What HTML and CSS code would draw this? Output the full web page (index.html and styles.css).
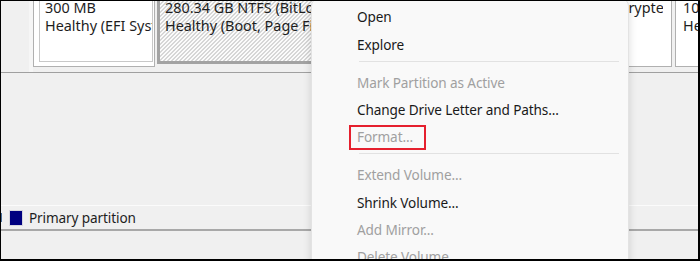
FILE: index.html
```html
<!DOCTYPE html>
<html>
<head>
<meta charset="utf-8">
<link rel="stylesheet" href="styles.css">
</head>
<body>
<div class="frame">
  <div class="disk-row">
    <div class="disk-label"></div>
    <div class="parts">
      <div class="part p1">
        <div class="inner">
          <div class="txt">300 MB<br>Healthy (EFI System Partition)</div>
        </div>
      </div>
      <div class="part p2">
        <div class="txt">280.34 GB NTFS (BitLocker Encrypted)<br>Healthy (Boot, Page File, Crash Dump, Primary Partition)</div>
      </div>
      <div class="part p3">
        <div class="clip">
          <div class="txt right">200.00 GB NTFS (BitLocker Encrypted)</div>
        </div>
      </div>
      <div class="part p4">
        <div class="txt">100 GB<br>Healthy</div>
      </div>
    </div>
  </div>
  <div class="spacer"></div>
  <div class="legend">
    <span class="tick"></span>
    <span class="swatch"></span>
    <span class="legend-text">Primary partition</span>
  </div>
  <div class="bottom"></div>

  <div class="menu">
    <div class="item">Open</div>
    <div class="item">Explore</div>
    <div class="sep"></div>
    <div class="item disabled">Mark Partition as Active</div>
    <div class="item">Change Drive Letter and Paths...</div>
    <div class="item disabled format">Format...<span class="highlight"></span></div>
    <div class="sep"></div>
    <div class="item disabled">Extend Volume...</div>
    <div class="item">Shrink Volume...</div>
    <div class="item disabled">Add Mirror...</div>
    <div class="item disabled">Delete Volume...</div>
  </div>
</div>
</body>
</html>
```
FILE: styles.css
```css
body {
  margin: 0;
  width: 700px;
  height: 261px;
  overflow: hidden;
  background: #f0f0f0;
  font-family: "Noto Sans", "Open Sans", sans-serif;
}

.frame {
  position: relative;
  box-sizing: border-box;
  width: 700px;
  height: 261px;
  border-style: solid;
  border-color: #000;
  border-width: 1px 2px 2px 1px;
  background: #f0f0f0;
  overflow: hidden;
  display: flex;
  flex-direction: column;
}

.disk-row {
  display: flex;
  flex: none;
  height: 71px;
  border-bottom: 1px solid #a0a0a0;
}

.disk-label {
  width: 28px;
  flex: none;
}

.parts {
  display: flex;
  align-items: flex-start;
  flex: 1;
  min-width: 0;
  border-left: 4px solid #f6f6f6;
}

.part {
  flex: none;
  box-sizing: border-box;
  background: #fff;
  border: 1px solid #b0b0b0;
  border-top: none;
  height: 66px;
  font-size: 14.4px;
  line-height: 18px;
  color: #1e1e1e;
  overflow: hidden;
  white-space: nowrap;
}

.txt {
  margin-top: -2px;
}

.p1 {
  width: 122px;
  padding: 0 1px 4px 5px;
}

.p1 .inner {
  height: 100%;
  box-sizing: border-box;
  border-left: 1px solid #c8c8c8;
  border-right: 1px solid #c8c8c8;
  border-bottom: 1px solid #c8c8c8;
  padding-left: 5px;
  overflow: hidden;
}

.p2 {
  margin-left: 2px;
  width: 263px;
  height: 63px;
  border: 3px solid #a3a3a3;
  border-top: none;
  padding-left: 5px;
  background: repeating-linear-gradient(135deg, #fbfbfb 0 1.5px, #d6d6d6 1.5px 2.83px);
}

.p3 {
  margin-left: 2px;
  width: 250px;
  padding-right: 8px;
}

.clip {
  overflow: hidden;
}

.right {
  text-align: right;
  margin-right: -13px;
}

.p4 {
  margin-left: 3px;
  width: 40px;
  padding-left: 7px;
}

.spacer {
  flex: none;
  height: 132px;
}

.legend {
  flex: none;
  height: 23px;
  display: flex;
  align-items: center;
  border-top: 1px solid #fbfbfb;
  border-bottom: 2px solid #a8a8a8;
  font-size: 13.6px;
  letter-spacing: -0.12px;
  color: #1e1e1e;
}

.tick {
  width: 1px;
  height: 9px;
  background: #4a6f9c;
  margin-right: 7px;
}

.swatch {
  box-sizing: border-box;
  width: 14px;
  height: 16px;
  background: #000080;
  border: 1px solid #d6d6de;
  margin-right: 6px;
}

.bottom {
  flex: 1;
}

.menu {
  position: absolute;
  left: 310px;
  top: -3px;
  width: 318px;
  height: 280px;
  box-sizing: border-box;
  background: #f9f9f9;
  border: 1px solid #e3e3e3;
  border-radius: 8px;
  box-shadow: 0 2px 8px rgba(0, 0, 0, 0.14);
  padding-top: 4.35px;
  font-size: 13.6px;
  letter-spacing: -0.12px;
  color: #1a1a1a;
}

.item {
  position: relative;
  height: 27.3px;
  line-height: 27.3px;
  padding-left: 45px;
  white-space: nowrap;
}

.item.disabled {
  color: #a0a0a0;
}

.sep {
  height: 1px;
  background: #e2e2e2;
  margin: 2.7px 9px 7.1px 47px;
}

.highlight {
  position: absolute;
  left: 37px;
  top: 1.6px;
  width: 77px;
  height: 25px;
  box-sizing: border-box;
  border: 2px solid #e5202e;
}
```
